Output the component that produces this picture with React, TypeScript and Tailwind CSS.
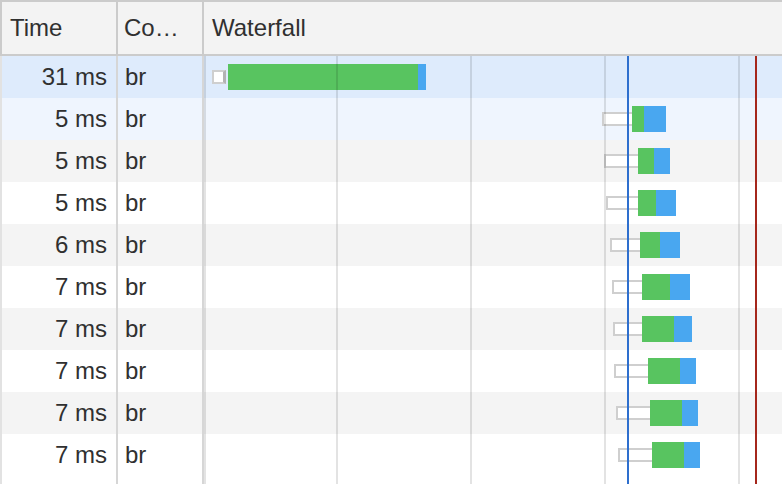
import React from "react";

type Row = {
  t: string;
  box: [number, number];
  g: [number, number];
  b: [number, number];
  bg: string;
  first?: boolean;
};

const W0 = 204;

const rows: Row[] = [
  { t: "31 ms", box: [212, 226], g: [228, 418], b: [418, 426], bg: "bg-[#deebfc]", first: true },
  { t: "5 ms", box: [602, 632], g: [632, 644], b: [644, 666], bg: "bg-[#eff5fe]" },
  { t: "5 ms", box: [604, 638], g: [638, 654], b: [654, 670], bg: "bg-[#f4f4f4]" },
  { t: "5 ms", box: [606, 638], g: [638, 656], b: [656, 676], bg: "bg-white" },
  { t: "6 ms", box: [610, 640], g: [640, 660], b: [660, 680], bg: "bg-[#f4f4f4]" },
  { t: "7 ms", box: [612, 642], g: [642, 670], b: [670, 690], bg: "bg-white" },
  { t: "7 ms", box: [613, 642], g: [642, 674], b: [674, 692], bg: "bg-[#f4f4f4]" },
  { t: "7 ms", box: [614, 648], g: [648, 680], b: [680, 696], bg: "bg-white" },
  { t: "7 ms", box: [616, 650], g: [650, 682], b: [682, 698], bg: "bg-[#f4f4f4]" },
  { t: "7 ms", box: [618, 652], g: [652, 684], b: [684, 700], bg: "bg-white" },
];

const gridLines = [0, 132, 266, 400, 534];

export default function App() {
  return (
    <div className="w-[782px] h-[484px] overflow-hidden bg-white flex flex-col font-['Liberation_Sans',Arial,sans-serif] text-[24px] leading-none text-[#303030]">
      {/* Header */}
      <div className="flex h-[56px] shrink-0 bg-[#f3f3f3] border-t-2 border-b-2 border-[#cbcbcb]">
        <div className="w-[118px] shrink-0 border-l-2 border-r-2 border-[#cbcbcb] flex items-center pl-[8px]">
          Time
        </div>
        <div className="w-[86px] shrink-0 border-r-2 border-[#cbcbcb] flex items-center pl-[6px]">
          Co…
        </div>
        <div className="flex-1 flex items-center pl-[8px]">Waterfall</div>
      </div>

      {/* Body */}
      <div className="relative flex-1 flex flex-col">
        {rows.map((r, i) => (
          <div key={i} className={`flex h-[42px] shrink-0 ${r.bg}`}>
            <div className="w-[118px] shrink-0 border-l-2 border-l-[#e2e2e2] border-r-2 border-r-[#d6d6d6] flex items-center justify-end pr-[9px]">
              {r.t}
            </div>
            <div className="w-[86px] shrink-0 border-r-2 border-[#d6d6d6] flex items-center pl-[7px]">
              br
            </div>
            <div className="relative flex-1">
              <div
                className={`absolute top-[14px] h-[14px] bg-white border-2 border-[#cfcfcf] ${
                  r.first ? "border-r-[3px] border-r-[#b3b3b3]" : ""
                }`}
                style={{ left: r.box[0] - W0, width: r.box[1] - r.box[0] + (r.first ? 0 : 2) }}
              />
              <div
                className="absolute top-[8px] h-[26px] bg-[#58c460]"
                style={{ left: r.g[0] - W0, width: r.g[1] - r.g[0] }}
              />
              <div
                className="absolute top-[8px] h-[26px] bg-[#49a7f0]"
                style={{ left: r.b[0] - W0, width: r.b[1] - r.b[0] }}
              />
            </div>
          </div>
        ))}
        <div className="flex flex-1 bg-white">
          <div className="w-[118px] shrink-0 border-l-2 border-l-[#e2e2e2] border-r-2 border-r-[#d6d6d6]" />
          <div className="w-[86px] shrink-0 border-r-2 border-[#d6d6d6]" />
          <div className="flex-1" />
        </div>

        {/* Waterfall overlay lines */}
        <div className="absolute top-0 bottom-0 left-[204px] right-0 pointer-events-none">
          {gridLines.map((x) => (
            <div
              key={x}
              className="absolute top-0 bottom-0 w-[2px] bg-[rgba(0,0,0,0.11)]"
              style={{ left: x }}
            />
          ))}
          <div className="absolute top-0 bottom-0 left-[423px] w-[2px] bg-[#2e6fce]" />
          <div className="absolute top-0 bottom-0 left-[551px] w-[2px] bg-[#a5271c]" />
        </div>
      </div>
    </div>
  );
}
